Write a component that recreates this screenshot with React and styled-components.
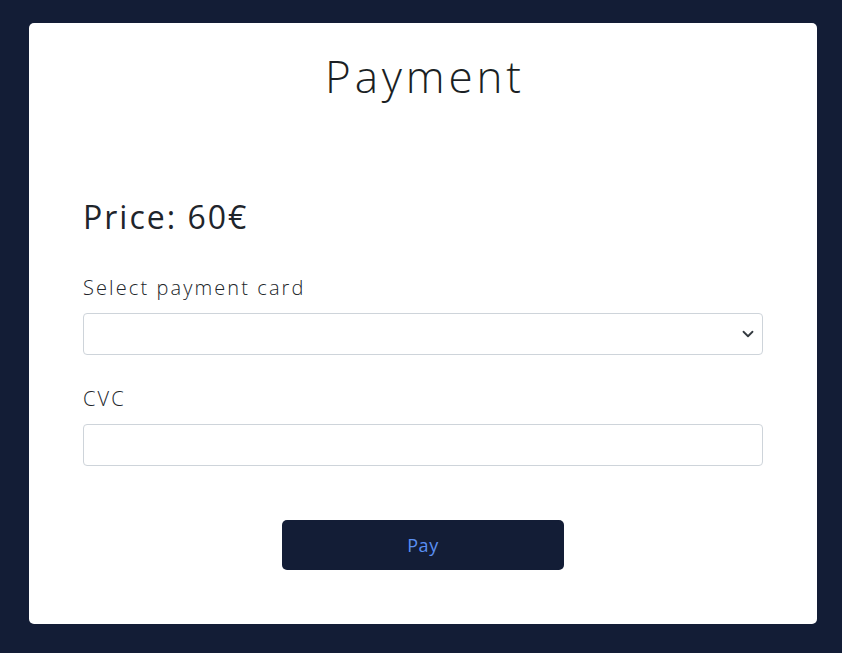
import React from "react";
import styled, { createGlobalStyle } from "styled-components";

const Global = createGlobalStyle`
  html, body { margin: 0; padding: 0; background: #131d36; }
  body { font-family: "Open Sans", "Noto Sans", sans-serif; color: #212529; }
  * { box-sizing: border-box; }
`;

const Page = styled.div`
  min-height: 653px;
  padding: 23px 25px 29px 29px;
  background: #131d36;
`;

const Card = styled.div`
  background: #fff;
  border-radius: 5px;
  height: 601px;
  padding: 27px 54px 0 54px;
  display: flex;
  flex-direction: column;
`;

const Title = styled.h1`
  margin: 0;
  text-align: center;
  font-weight: 300;
  font-size: 44px;
  line-height: 53px;
  letter-spacing: 3.8px;
  text-indent: 3.8px;
  color: #1b1f24;
`;

const Price = styled.h2`
  margin: 95px 0 37px;
  font-weight: 400;
  font-size: 32px;
  line-height: 38px;
  letter-spacing: 2px;
  color: #1f252b;
`;

const Field = styled.div`
  display: flex;
  flex-direction: column;
  margin-bottom: ${(p) => p.$mb || 0}px;
`;

const Label = styled.label`
  font-size: 20px;
  font-weight: 300;
  line-height: 30px;
  letter-spacing: 2.1px;
  margin-bottom: 10px;
  color: #212529;
`;

const Control = styled.div`
  position: relative;
  height: 42px;
  border: 1px solid #ced4da;
  border-radius: 4px;
  background: #fff;
`;

const Chevron = styled.svg`
  position: absolute;
  right: 8px;
  top: 14px;
`;

const Button = styled.button`
  align-self: center;
  margin-top: 54px;
  width: 282px;
  height: 50px;
  border: none;
  border-radius: 5px;
  background: #131d36;
  color: #5a8ff2;
  font-family: inherit;
  font-size: 18px;
  font-weight: 500;
  letter-spacing: 0.6px;
`;

export default function App() {
  return (
    <>
      <Global />
      <Page>
        <Card>
          <Title>Payment</Title>
          <Price>Price: 60€</Price>
          <Field $mb={29}>
            <Label>Select payment card</Label>
            <Control>
              <Chevron width="12" height="12" viewBox="0 0 16 16">
                <path d="M2 5l6 6 6-6" fill="none" stroke="#343a40" strokeWidth="2.4" strokeLinecap="round" strokeLinejoin="round" />
              </Chevron>
            </Control>
          </Field>
          <Field>
            <Label>CVC</Label>
            <Control />
          </Field>
          <Button>Pay</Button>
        </Card>
      </Page>
    </>
  );
}
